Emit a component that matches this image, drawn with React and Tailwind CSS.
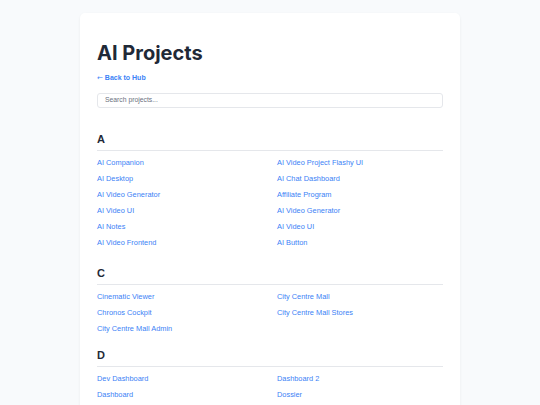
import React from "react";

const sections = [
  {
    letter: "A",
    items: [
      "AI Companion",
      "AI Video Project Flashy UI",
      "AI Desktop",
      "AI Chat Dashboard",
      "AI Video Generator",
      "Affiliate Program",
      "AI Video UI",
      "AI Video Generator",
      "AI Notes",
      "AI Video UI",
      "AI Video Frontend",
      "AI Button",
    ],
  },
  {
    letter: "C",
    items: [
      "Cinematic Viewer",
      "City Centre Mall",
      "Chronos Cockpit",
      "City Centre Mall Stores",
      "City Centre Mall Admin",
    ],
  },
  {
    letter: "D",
    items: ["Dev Dashboard", "Dashboard 2", "Dashboard", "Dossier"],
  },
];

export default function App() {
  return (
    <div
      className="h-[405px] overflow-hidden bg-[#f8fafc] pt-[13px]"
      style={{ fontFamily: "'Liberation Sans', Arial, sans-serif" }}
    >
      <div className="mx-auto w-[380px] rounded-[5px] bg-white px-[17px] pt-[28px] pb-6 shadow-[0_1px_3px_rgba(0,0,0,0.06)]">
        <h1
          className="text-[20px] font-bold leading-[24px] text-[#1f2937]"
          style={{ fontFamily: "Inter, sans-serif" }}
        >
          AI Projects
        </h1>
        <a className="mt-[7px] block text-[7px] font-bold leading-[12px] text-[#3b82f6]">
          <span style={{ fontFamily: "'DejaVu Sans', sans-serif" }} className="font-normal">←</span> Back to Hub
        </a>
        <div className="mt-[9px] flex h-[15px] items-center rounded-[3px] border border-[#e5e7eb] px-[7px] text-[6.8px] text-[#6b7280]">
          Search projects...
        </div>
        <div className="mt-[24px]">
          {sections.map((s, i) => (
            <div key={s.letter} className={i === 0 ? "" : i === 1 ? "mt-[15px]" : "mt-[11px]"}>
              <h2 className="border-b border-[#e5e7eb] pb-[4px] text-[11px] font-bold leading-[14px] text-[#1f2937]">
                {s.letter}
              </h2>
              <div className="mt-[4px] grid grid-cols-[180px_1fr]">
                {s.items.map((it, j) => (
                  <a
                    key={j}
                    className="block text-[7.4px] leading-[16px] text-[#3b82f6]"
                  >
                    {it}
                  </a>
                ))}
              </div>
            </div>
          ))}
        </div>
      </div>
    </div>
  );
}
